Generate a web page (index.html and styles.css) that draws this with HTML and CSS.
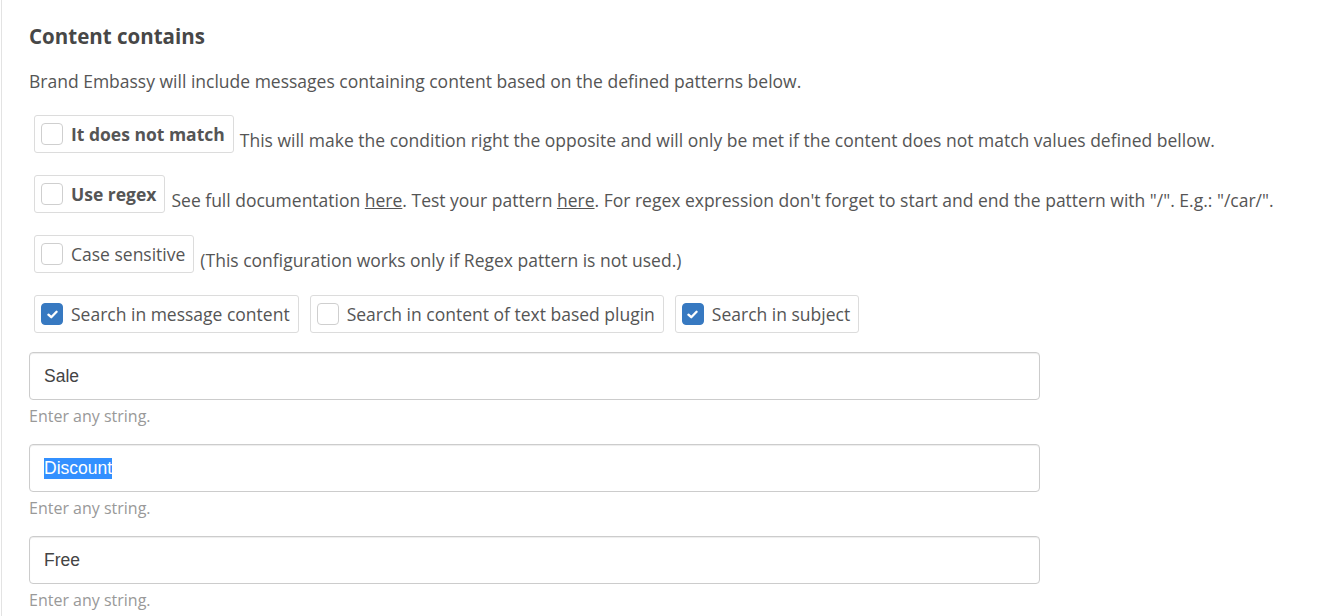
FILE: index.html
```html
<!DOCTYPE html>
<html>
<head>
<meta charset="utf-8">
<link rel="stylesheet" href="styles.css">
</head>
<body>
<div class="panel">
  <h2 class="title">Content contains</h2>
  <p class="lead">Brand Embassy will include messages containing content based on the defined patterns below.</p>

  <div class="opt-row">
    <label class="chk bold"><span class="box"></span><span>It does not match</span></label>
    <span class="note">This will make the condition right the opposite and will only be met if the content does not match values defined bellow.</span>
  </div>

  <div class="opt-row">
    <label class="chk bold"><span class="box"></span><span>Use regex</span></label>
    <span class="note">See full documentation <a href="#" class="lnk">here</a>. Test your pattern <a href="#" class="lnk">here</a>. For regex expression don't forget to start and end the pattern with "/". E.g.: "/car/".</span>
  </div>

  <div class="opt-row">
    <label class="chk"><span class="box"></span><span>Case sensitive</span></label>
    <span class="note">(This configuration works only if Regex pattern is not used.)</span>
  </div>

  <div class="opt-row multi">
    <label class="chk"><span class="box on"><svg viewBox="0 0 12 10" width="11" height="9"><path d="M1.5 5.2 L4.6 8 L10.5 2" fill="none" stroke="#fff" stroke-width="2.6" stroke-linecap="round" stroke-linejoin="round"/></svg></span><span>Search in message content</span></label>
    <label class="chk"><span class="box"></span><span>Search in content of text based plugin</span></label>
    <label class="chk"><span class="box on"><svg viewBox="0 0 12 10" width="11" height="9"><path d="M1.5 5.2 L4.6 8 L10.5 2" fill="none" stroke="#fff" stroke-width="2.6" stroke-linecap="round" stroke-linejoin="round"/></svg></span><span>Search in subject</span></label>
  </div>

  <div class="field">
    <div class="input">Sale</div>
    <div class="help">Enter any string.</div>
  </div>
  <div class="field">
    <div class="input"><span class="sel">Discount</span></div>
    <div class="help">Enter any string.</div>
  </div>
  <div class="field">
    <div class="input">Free</div>
    <div class="help">Enter any string.</div>
  </div>
</div>
</body>
</html>
```

FILE: styles.css
```css
html, body {
  margin: 0;
  padding: 0;
  background: #fff;
}
body {
  font-family: "Open Sans", "Noto Sans", sans-serif;
  color: #555;
  font-size: 17.5px;
  overflow: hidden;
  height: 616px;
}
.panel {
  margin-left: 1px;
  border-left: 1px solid #e3e3e3;
  padding: 22px 0 0 27px;
  min-height: 600px;
}
.title {
  margin: 0;
  font-size: 20.5px;
  line-height: 28px;
  font-weight: 700;
  color: #474747;
}
.lead {
  margin: 19px 0 22px;
  line-height: 24px;
}
.opt-row {
  display: flex;
  align-items: flex-end;
  margin: 0 0 22px 5px;
}
.opt-row.multi {
  gap: 11px;
  margin-bottom: 19px;
}
.chk {
  display: inline-flex;
  align-items: center;
  height: 38px;
  box-sizing: border-box;
  border: 1px solid #dcdcdc;
  border-radius: 3px;
  padding: 0 8px 0 6px;
  line-height: 24px;
  white-space: nowrap;
}
.chk.bold {
  font-weight: 700;
}
.box {
  width: 22px;
  height: 22px;
  box-sizing: border-box;
  border: 1px solid #cfcfcf;
  border-radius: 4px;
  margin-right: 8px;
  display: flex;
  align-items: center;
  justify-content: center;
  background: #fff;
}
.box.on {
  background: #3779c1;
  border-color: #3779c1;
}
.note {
  margin-left: 6px;
  line-height: 24px;
  padding-bottom: 1px;
  white-space: nowrap;
}
.lnk {
  color: #555;
  text-decoration: underline;
}
.field {
  width: 1011px;
  margin-bottom: 17px;
}
.input {
  height: 48px;
  box-sizing: border-box;
  border: 1px solid #ccc;
  border-radius: 4px;
  box-shadow: inset 0 1px 1px rgba(0,0,0,0.075);
  padding: 0 14px;
  display: flex;
  align-items: center;
  font-family: "Liberation Sans", Arial, sans-serif;
  font-size: 17.5px;
  color: #444;
}
.sel {
  background: #3390ff;
  color: #fff;
}
.help {
  color: #999;
  font-size: 16px;
  line-height: 22px;
  margin-top: 5px;
}
```
